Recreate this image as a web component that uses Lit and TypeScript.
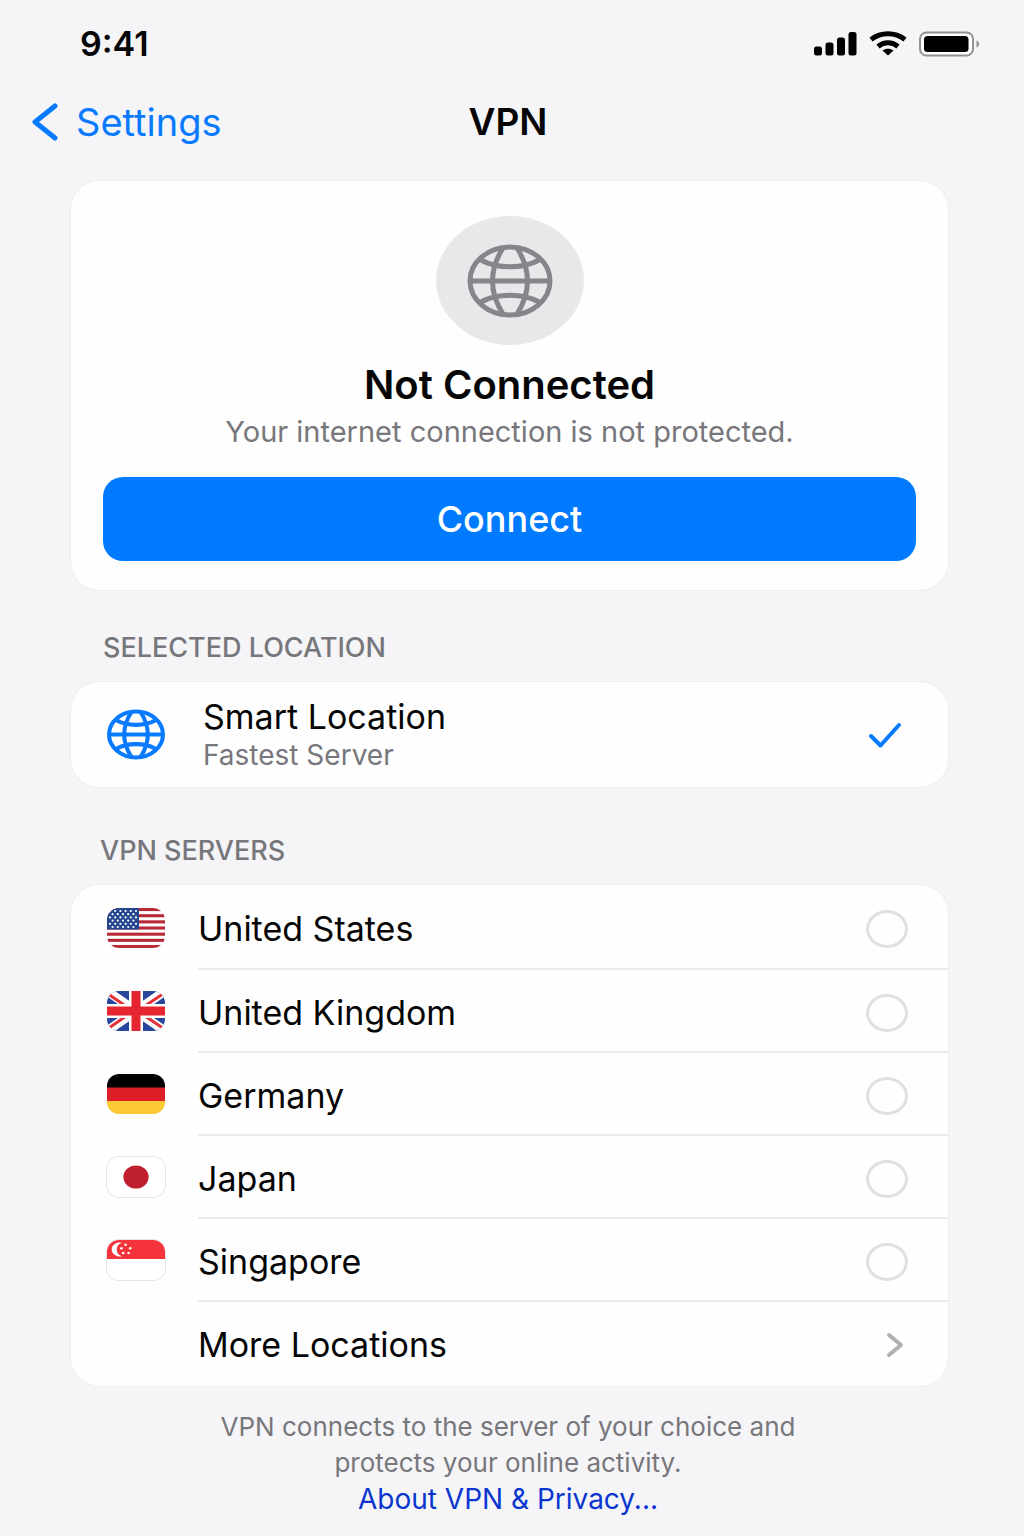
import { LitElement, html, css, svg, nothing } from "lit";
import { customElement, property, state } from "lit/decorators.js";

type Server = { id: string; name: string };

const SERVERS: Server[] = [
  { id: "us", name: "United States" },
  { id: "gb", name: "United Kingdom" },
  { id: "de", name: "Germany" },
  { id: "jp", name: "Japan" },
  { id: "sg", name: "Singapore" },
];

@customElement("globe-icon")
class GlobeIcon extends LitElement {
  static styles = css`
    :host {
      display: block;
    }
    .globe {
      display: block;
      width: 100%;
      height: 100%;
      fill: none;
      stroke: currentColor;
    }
  `;

  @property({ type: Number }) weight = 5;

  render() {
    return html`
      <svg class="globe" viewBox="0 0 86 74" stroke-width=${this.weight} aria-hidden="true">
        <ellipse cx="43" cy="37" rx="40" ry="34" />
        <path d="M3 37H83" />
        <path d="M36 4C22 26 22 48 36 70M50 4C64 26 64 48 50 70" />
        <path d="M14 16C30 25 56 25 72 16M14 58C30 49 56 49 72 58" />
      </svg>
    `;
  }
}

@customElement("country-flag")
class CountryFlag extends LitElement {
  static styles = css`
    :host {
      display: block;
      width: 58px;
      height: 40px;
    }
    .flag {
      display: block;
      box-sizing: border-box;
      width: 100%;
      height: 100%;
      border-radius: 12px;
      overflow: hidden;
    }
    .edged {
      box-shadow: 0 0 0 1px #e4e4e7;
    }
  `;

  @property() code = "";

  private art() {
    switch (this.code) {
      case "us": {
        const rows = [0, 1, 2, 3, 4, 5];
        return svg`
          <rect width="58" height="40" fill="#fff" />
          ${[0, 1, 2, 3, 4, 5, 6].map(
            (i) => svg`<rect y=${i * 6.16} width="58" height="3.1" fill="#b92a38" />`
          )}
          <rect width="32" height="21.5" fill="#24478f" />
          ${rows.map((r) =>
            [0, 1, 2, 3, 4, 5]
              .slice(0, r % 2 ? 5 : 6)
              .map(
                (c) =>
                  svg`<circle cx=${3 + c * 5.2 + (r % 2 ? 2.6 : 0)} cy=${3 + r * 3.2} r="1.1" fill="#fff" />`
              )
          )}
        `;
      }
      case "gb":
        return svg`
          <rect width="58" height="40" fill="#27479b" />
          <path d="M-2 -1.4L60 41.4M60 -1.4L-2 41.4" stroke="#fff" stroke-width="9" />
          <path d="M0 2.2L23 18M35 23L58 38.6M58 1.4L35 17M23 22.4L0 38.2" stroke="#e5303a" stroke-width="3" />
          <path d="M29 0V40M0 20H58" stroke="#fff" stroke-width="14" />
          <path d="M29 0V40M0 20H58" stroke="#e5252f" stroke-width="9" />
        `;
      case "de":
        return svg`
          <rect width="58" height="14" fill="#000" />
          <rect y="13.5" width="58" height="13.5" fill="#dc1f26" />
          <rect y="27" width="58" height="13" fill="#fcca36" />
        `;
      case "jp":
        return svg`
          <rect width="58" height="40" fill="#fff" />
          <ellipse cx="29" cy="20" rx="12.6" ry="11.6" fill="#bf1f2e" />
        `;
      case "sg":
        return svg`
          <rect width="58" height="40" fill="#fff" />
          <rect width="58" height="19" fill="#f5333b" />
          <path d="M15 2.8A8 7 0 1 0 15 16.2A7.4 7 0 0 1 15 2.8Z" fill="#fff" />
          ${[
            [18.6, 4.8],
            [14.4, 8.2],
            [23.2, 8.2],
            [16.2, 13],
            [21.6, 13],
          ].map(([x, y]) => svg`<circle cx=${x} cy=${y} r="1.3" fill="#fff" />`)}
        `;
      default:
        return nothing;
    }
  }

  render() {
    const light = this.code === "jp" || this.code === "sg";
    return html`
      <svg class="flag ${light ? "edged" : ""}" viewBox="0 0 58 40" aria-hidden="true">
        ${this.art()}
      </svg>
    `;
  }
}

@customElement("app-root")
class AppRoot extends LitElement {
  static styles = css`
    :host {
      display: block;
      min-height: 100vh;
      background: #f5f5f8;
      color: #050505;
      font-family: Inter, "Liberation Sans", sans-serif;
      -webkit-font-smoothing: antialiased;
    }
    * {
      box-sizing: border-box;
    }
    h1,
    h2,
    p,
    ul {
      margin: 0;
      padding: 0;
    }
    button {
      font: inherit;
      border: 0;
      cursor: pointer;
    }

    .status {
      display: flex;
      align-items: center;
      justify-content: space-between;
      height: 86px;
      padding: 0 44px 0 80px;
    }
    .time {
      font-size: 34px;
      font-weight: 600;
    }
    .signals {
      display: block;
      width: 168px;
      height: 28px;
    }

    .nav {
      display: grid;
      grid-template-columns: 1fr auto 1fr;
      align-items: center;
      height: 72px;
      padding: 0 40px 0 32px;
    }
    .back {
      display: flex;
      align-items: center;
      justify-self: start;
      gap: 18px;
      color: #087aff;
      font-size: 38px;
      line-height: 44px;
      text-decoration: none;
    }
    .back-icon {
      display: block;
      width: 26px;
      height: 38px;
    }
    .title {
      font-size: 37px;
      line-height: 44px;
      font-weight: 600;
    }

    main {
      padding: 23px 76px 0 71px;
    }
    .card {
      background: #fefefe;
      border-radius: 28px;
      box-shadow: 0 0 0 1px #eeeef1;
    }

    .hero {
      display: flex;
      flex-direction: column;
      align-items: center;
      padding: 35px 32px 29px;
      text-align: center;
    }
    .badge {
      display: grid;
      place-items: center;
      width: 148px;
      height: 129px;
      border-radius: 50%;
      background: #e8e8ea;
      color: #85858a;
    }
    .badge-globe {
      width: 86px;
      height: 74px;
    }
    .state {
      margin-top: 16px;
      font-size: 40px;
      line-height: 48px;
      font-weight: 600;
    }
    .hint {
      margin-top: 4px;
      color: #77777b;
      font-size: 29px;
      line-height: 38px;
    }
    .connect {
      width: 100%;
      height: 84px;
      margin-top: 26px;
      border-radius: 20px;
      background: #007aff;
      color: #fff;
      font-size: 36px;
      font-weight: 500;
    }

    .section {
      padding: 41px 32px 17px;
      color: #77777b;
      font-size: 27px;
      line-height: 34px;
      font-weight: 500;
    }
    .section-servers {
      padding: 47px 29px 17px;
    }

    .row {
      display: flex;
      align-items: stretch;
      width: 100%;
      min-height: 83px;
      padding-left: 36px;
      color: #050505;
      text-decoration: none;
      cursor: pointer;
    }
    .lead {
      display: flex;
      align-items: center;
      flex: none;
      width: 91px;
      padding-top: 3px;
    }
    .body {
      display: flex;
      flex: 1;
      align-items: center;
      justify-content: space-between;
      padding-top: 4px;
      padding-right: 40px;
    }
    .servers {
      padding-bottom: 3px;
      list-style: none;
    }
    .item + .item .body {
      border-top: 2px solid #ebebed;
    }
    .name {
      font-size: 34px;
      line-height: 40px;
    }

    .smart {
      min-height: 105px;
    }
    .smart .lead {
      width: 96px;
      padding-top: 0;
    }
    .smart .body {
      padding-top: 0;
    }
    .smart-globe {
      width: 58px;
      height: 51px;
      color: #087aff;
    }
    .smart-text {
      display: flex;
      flex-direction: column;
    }
    .detail {
      color: #77777b;
      font-size: 28px;
      line-height: 36px;
    }

    .pick {
      display: grid;
      place-items: center;
      width: 42px;
      height: 38px;
    }
    .pick > * {
      grid-area: 1 / 1;
    }
    .radio {
      appearance: none;
      width: 42px;
      height: 38px;
      margin: 0;
      border: 3px solid #e0e0e2;
      border-radius: 50%;
      cursor: pointer;
    }
    .radio:checked {
      border-color: transparent;
    }
    .tick {
      display: none;
      width: 34px;
      height: 28px;
      margin-right: 4px;
      pointer-events: none;
    }
    .radio:checked + .tick {
      display: block;
    }
    .chevron {
      display: block;
      width: 18px;
      height: 26px;
      margin-right: 4px;
    }

    .foot {
      padding: 23px 3px 0 0;
      color: #77777b;
      font-size: 26px;
      line-height: 36px;
      text-align: center;
    }
    .foot-text {
      max-width: 600px;
      margin: 0 auto;
    }
    .about {
      color: #0a35cf;
      font-size: 28px;
      text-decoration: none;
    }
  `;

  @state() private connected = false;
  @state() private location = "smart";

  private pick(id: string) {
    return html`
      <span class="pick">
        <input
          class="radio"
          type="radio"
          name="location"
          id=${`loc-${id}`}
          .checked=${this.location === id}
          @change=${() => (this.location = id)}
        />
        <svg class="tick" viewBox="0 0 34 28" fill="none" stroke="#087aff" stroke-width="4" stroke-linecap="round" stroke-linejoin="round" aria-hidden="true">
          <path d="M3 15L12.5 24.5L31 4" />
        </svg>
      </span>
    `;
  }

  render() {
    return html`
      <div class="status">
        <span class="time">9:41</span>
        <svg class="signals" viewBox="0 0 168 28" aria-hidden="true">
          <rect x="2" y="17.5" width="8" height="9" rx="2.5" />
          <rect x="13.5" y="13.5" width="8" height="13" rx="2.5" />
          <rect x="25" y="8.5" width="8" height="18" rx="2.5" />
          <rect x="36.5" y="3" width="8" height="23.5" rx="2.5" />
          <g fill="none" stroke="#000" stroke-width="5">
            <path d="M59 10.5C69 2.8 83 2.8 93 10.5" />
            <path d="M66 17.5C72 12.6 80 12.6 86 17.5" />
          </g>
          <path d="M70.5 21.5C73.5 19 78.5 19 81.5 21.5L76 26.5Z" />
          <rect x="108" y="3.5" width="53" height="23" rx="6.5" fill="#fff" stroke="#929295" stroke-width="2" />
          <rect x="112" y="7" width="44.5" height="16" rx="3.5" />
          <path d="M164.5 11.5C168 12.5 168 17.5 164.5 18.5Z" fill="#929295" />
        </svg>
      </div>

      <header class="nav">
        <a class="back" href="#settings">
          <svg class="back-icon" viewBox="0 0 26 38" fill="none" stroke="#087aff" stroke-width="5" stroke-linecap="round" stroke-linejoin="round" aria-hidden="true">
            <path d="M23 3L3 19L23 35" />
          </svg>
          <span>Settings</span>
        </a>
        <h1 class="title">VPN</h1>
      </header>

      <main>
        <section class="card hero">
          <div class="badge"><globe-icon class="badge-globe"></globe-icon></div>
          <h2 class="state">${this.connected ? "Connected" : "Not Connected"}</h2>
          <p class="hint">
            Your internet connection is ${this.connected ? "" : "not "}protected.
          </p>
          <button class="connect" type="button" @click=${() => (this.connected = !this.connected)}>
            ${this.connected ? "Disconnect" : "Connect"}
          </button>
        </section>

        <h2 class="section">SELECTED LOCATION</h2>
        <label class="card row smart" for="loc-smart">
          <span class="lead"><globe-icon class="smart-globe" weight="6"></globe-icon></span>
          <span class="body">
            <span class="smart-text">
              <span class="name">Smart Location</span>
              <span class="detail">Fastest Server</span>
            </span>
            ${this.pick("smart")}
          </span>
        </label>

        <h2 class="section section-servers">VPN SERVERS</h2>
        <ul class="card servers">
          ${SERVERS.map(
            (s) => html`
              <li class="item">
                <label class="row" for=${`loc-${s.id}`}>
                  <span class="lead"><country-flag code=${s.id}></country-flag></span>
                  <span class="body">
                    <span class="name">${s.name}</span>
                    ${this.pick(s.id)}
                  </span>
                </label>
              </li>
            `
          )}
          <li class="item">
            <a class="row" href="#locations">
              <span class="lead"></span>
              <span class="body">
                <span class="name">More Locations</span>
                <svg class="chevron" viewBox="0 0 18 26" fill="none" stroke="#b0b0b3" stroke-width="4" stroke-linecap="round" stroke-linejoin="round" aria-hidden="true">
                  <path d="M3 3L15 13L3 23" />
                </svg>
              </span>
            </a>
          </li>
        </ul>

        <footer class="foot">
          <p class="foot-text">
            VPN connects to the server of your choice and protects your online activity.
          </p>
          <a class="about" href="#privacy">About VPN &amp; Privacy...</a>
        </footer>
      </main>
    `;
  }
}
